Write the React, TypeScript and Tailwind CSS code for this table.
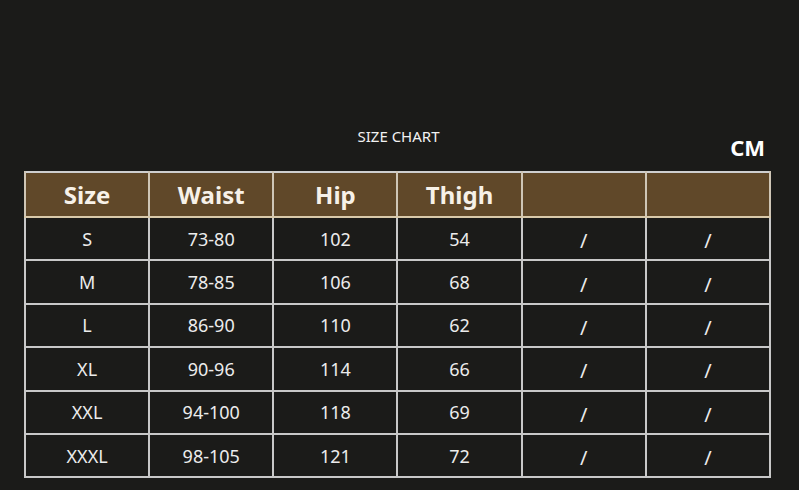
const headers = ['Size', 'Waist', 'Hip', 'Thigh', '', '']

const rows = [
  ['S', '73-80', '102', '54', '/', '/'],
  ['M', '78-85', '106', '68', '/', '/'],
  ['L', '86-90', '110', '62', '/', '/'],
  ['XL', '90-96', '114', '66', '/', '/'],
  ['XXL', '94-100', '118', '69', '/', '/'],
  ['XXXL', '98-105', '121', '72', '/', '/'],
]

export default function App() {
  return (
    <div
      className="w-[799px] h-[490px] bg-[#1b1b19] text-[#ececec] overflow-hidden"
      style={{ fontFamily: '"Noto Sans", "Open Sans", sans-serif' }}
    >
      <div className="pt-[126px] pl-[24px] pr-[28px]">
        {/* title row */}
        <div className="relative h-[45px]">
          <div className="text-center text-[15px] leading-[20px] text-[#f2f2f2] pl-[2px]">SIZE CHART</div>
          <div className="absolute right-[6px] top-[6px] text-[22px] font-bold leading-[30px] text-white">CM</div>
        </div>

        <table className="w-[747px] table-fixed border-collapse border-2 border-[#cfcfcf]">
          <thead>
            <tr className="h-[45px] bg-[#604829]">
              {headers.map((h, i) => (
                <th
                  key={i}
                  className="border-x-2 border-[#cfc6b6] border-b-2 border-b-[#d9c9aa] text-[24px] font-bold text-[#f7f1e8] leading-none p-0"
                >
                  {h}
                </th>
              ))}
            </tr>
          </thead>
          <tbody>
            {rows.map((r, ri) => (
              <tr key={ri} className="h-[43.4px]">
                {r.map((c, ci) => (
                  <td
                    key={ci}
                    className={`border-2 border-[#c8c8c8] text-center p-0 leading-none ${
                      c === '/' ? 'text-[20px] pt-[5px]' : 'text-[18px]'
                    }`}
                  >
                    {c}
                  </td>
                ))}
              </tr>
            ))}
          </tbody>
        </table>
      </div>
    </div>
  )
}
